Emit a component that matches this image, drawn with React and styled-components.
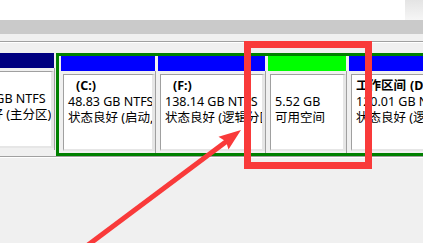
import React from "react";
import styled, { createGlobalStyle } from "styled-components";

const GlobalStyle = createGlobalStyle`
  html, body {
    margin: 0;
    padding: 0;
    width: 423px;
    height: 243px;
    overflow: hidden;
    background: #f0f0f0;
  }
`;

const PARTITIONS = [
  {
    id: "c",
    width: 94,
    color: "#0000ff",
    label: "",
    drive: "(C:)",
    size: "48.83 GB NTFS",
    status: "状态良好 (启动, 页面文件, 故障转储, 主分区)",
  },
  {
    id: "f",
    width: 107,
    color: "#0000ff",
    label: "",
    drive: "(F:)",
    size: "138.14 GB NTFS",
    status: "状态良好 (逻辑分区)",
  },
  {
    id: "free",
    width: 78,
    color: "#00ff00",
    free: true,
    size: "5.52 GB",
    status: "可用空间",
  },
  {
    id: "d",
    width: 130,
    color: "#0000ff",
    label: "工作区间",
    drive: "(D:)",
    size: "120.01 GB NTFS",
    status: "状态良好 (逻辑分区)",
  },
];

export default function App() {
  function renderPartition(part) {
    return (
      <Column key={part.id} $width={part.width}>
        <Header $color={part.color} />
        <Body>
          <Box>
            <Line $bold>
              {part.free ? "" : part.label}
              {part.drive && <Drive $indent={!part.label}>{part.drive}</Drive>}
            </Line>
            <Line>{part.size}</Line>
            <Line>{part.status}</Line>
          </Box>
        </Body>
      </Column>
    );
  }

  return (
    <Page>
      <GlobalStyle />
      <TopArea>
        <Corner />
      </TopArea>
      <Toolbar />
      <Separator />
      <DiskStrip>
        <Column $width={108}>
          <Header $color="#000080" />
          <Body>
            <Box>
              <Line $bold></Line>
              <Line>104.00 GB NTFS</Line>
              <Line>状态良好 (主分区)</Line>
            </Box>
          </Body>
        </Column>
        <ExtendedFrame>{PARTITIONS.map(renderPartition)}</ExtendedFrame>
      </DiskStrip>
      <BottomRule />
      <Annotations width="423" height="243" viewBox="0 0 423 243">
        <rect
          x="247.5"
          y="44.5"
          width="121"
          height="121"
          fill="none"
          stroke="#f93a3a"
          strokeWidth="7"
        />
        <line
          x1="84"
          y1="248"
          x2="227"
          y2="141"
          stroke="#f93a3a"
          strokeWidth="5"
        />
        <polygon
          points="241,130 228.5,149.5 226,141.5 218.5,136.8"
          fill="#f93a3a"
        />
      </Annotations>
    </Page>
  );
}

const Page = styled.div`
  position: relative;
  width: 423px;
  height: 243px;
  overflow: hidden;
  background: #f0f0f0;
  font-family: "Noto Sans", "Noto Sans CJK SC", sans-serif;
  font-size: 12.5px;
  color: #000;
`;

const TopArea = styled.div`
  height: 20px;
  background: #fff;
  display: flex;
  justify-content: flex-end;
`;

const Corner = styled.div`
  width: 18px;
  height: 20px;
  background: linear-gradient(to bottom, #e4e4e4, #f6f6f6);
`;

const Toolbar = styled.div`
  height: 14px;
  background: #cacaca;
`;

const Separator = styled.div`
  height: 7px;
  border-bottom: 1px solid #a0a0a0;
  box-shadow: 0 1px 0 #ffffff;
  margin-bottom: 11px;
`;

const DiskStrip = styled.div`
  display: flex;
  align-items: flex-start;
  gap: 2px;
  margin-left: -54px;
  height: 103px;
`;

const ExtendedFrame = styled.div`
  flex: none;
  display: flex;
  gap: 3px;
  height: 97px;
  padding: 0 0 0 2px;
  border: 3px solid #008000;
  border-right: none;
`;

const Column = styled.div`
  flex: none;
  width: ${(p) => p.$width}px;
  height: 97px;
  display: flex;
  flex-direction: column;
`;

const Header = styled.div`
  flex: none;
  height: 15px;
  background: ${(p) => p.$color};
`;

const Body = styled.div`
  flex: 1;
  display: flex;
  padding: 3px 0 2px 2px;
  border-right: 1px solid #a0a0a0;
  margin-right: -1px;
`;

const Box = styled.div`
  flex: 1;
  min-width: 0;
  background: #fff;
  border-left: 1px solid #a0a0a0;
  border-top: 1px solid #a0a0a0;
  border-right: 3px solid #e6e6e6;
  border-bottom: 2px solid #e6e6e6;
  padding: 3px 0 0 4px;
  overflow: hidden;
  white-space: nowrap;
`;

const Line = styled.div`
  height: 16px;
  line-height: 16px;
  font-weight: ${(p) => (p.$bold ? 700 : 400)};
`;

const Drive = styled.span`
  margin-left: ${(p) => (p.$indent ? "8px" : "4px")};
`;

const BottomRule = styled.div`
  height: 1px;
  background: #a0a0a0;
  border-bottom: 1px solid #ffffff;
`;

const Annotations = styled.svg`
  position: absolute;
  left: 0;
  top: 0;
  pointer-events: none;
`;
